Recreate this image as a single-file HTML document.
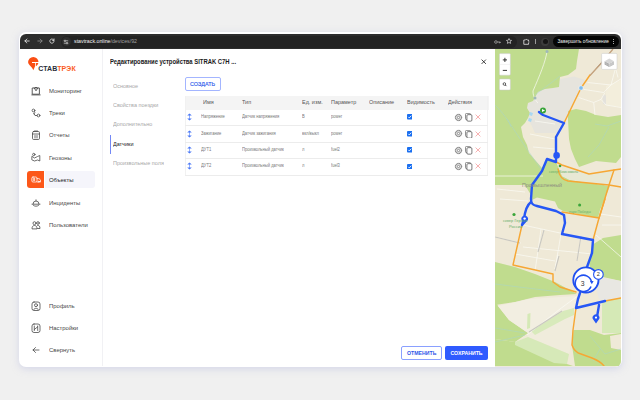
<!DOCTYPE html>
<html><head><meta charset="utf-8">
<style>
*{box-sizing:border-box;margin:0;padding:0}
html,body{width:640px;height:400px;overflow:hidden;background:#f0f0f0;font-family:"Liberation Sans",sans-serif;position:relative}
.a{position:absolute}
.t{position:absolute;white-space:nowrap;line-height:1}
#win{left:18.5px;top:31.8px;width:603.5px;height:335px;border-radius:7px;background:#fff;box-shadow:0 2px 7px rgba(185,190,225,.5)}
#bar{left:19px;top:33px;width:602px;height:16px}
.mi{position:absolute;left:49px;font-size:6.2px;color:#484848;white-space:nowrap;line-height:1;transform:scaleX(0.96);transform-origin:0 50%}
.tab{position:absolute;left:113px;font-size:6px;color:#a8a8a8;white-space:nowrap;line-height:1;transform:scaleX(0.91);transform-origin:0 50%}
#map{left:495px;top:48.8px;width:126px;height:318px;background:#ece9dd;overflow:hidden;border-radius:0 0 6px 0}
.th{position:absolute;top:99.2px;font-size:6px;color:#555;white-space:nowrap;line-height:1;transform:scaleX(0.91);transform-origin:0 50%}
.td{position:absolute;font-size:4.5px;color:#777;white-space:nowrap;line-height:1;transform:scaleX(0.91);transform-origin:0 50%}
</style></head>
<body>
<div id="win" class="a"></div>
<div id="bar" class="a">
  <div class="a" style="left:0.9px;top:0.8px;width:601.1px;height:15px;background:#2d2d2d;border-radius:6px 6px 0 0"></div>
  <svg class="a" style="left:4.9px;top:5.3px" width="6" height="6" viewBox="0 0 6 6" fill="none" stroke="#e6e6e6" stroke-width="0.85" stroke-linecap="round" stroke-linejoin="round"><path d="M5.2,3 H0.9 M2.9,1 L0.9,3 L2.9,5"/></svg>
  <svg class="a" style="left:17.5px;top:5.3px" width="6" height="6" viewBox="0 0 6 6" fill="none" stroke="#8c8c8c" stroke-width="0.85" stroke-linecap="round" stroke-linejoin="round"><path d="M0.8,3 H5.1 M3.1,1 L5.1,3 L3.1,5"/></svg>
  <svg class="a" style="left:29.7px;top:5.3px" width="6" height="6" viewBox="0 0 6 6" fill="none" stroke="#e6e6e6" stroke-width="0.85" stroke-linecap="round"><path d="M4.9,2.3 A2.1,2.1 0 1 0 5,3.6"/><path d="M5,0.9 V2.4 H3.6"/></svg>
  <div class="a" style="left:42px;top:2.5px;width:456px;height:12px;border-radius:6px;background:#232323"></div>
  <div class="a" style="left:42.6px;top:3.7px;width:9.6px;height:9.6px;border-radius:5px;background:#2f2f2f"></div>
  <svg class="a" style="left:44.4px;top:5.5px" width="6" height="6" viewBox="0 0 6 6" fill="none" stroke="#dcdcdc" stroke-width="0.65"><path d="M0.8,1.8 H5.2 M0.8,4.2 H5.2"/><circle cx="2" cy="1.8" r="0.75" fill="#2f2f2f"/><circle cx="4" cy="4.2" r="0.75" fill="#2f2f2f"/></svg>
  <div class="t" style="left:55px;top:6.2px;font-size:5.25px;color:#f2f2f2">stavtrack.online<span style="color:#a0a0a0">/devices/92</span></div>
  <svg class="a" style="left:475px;top:5.5px" width="7" height="6" viewBox="0 0 7 6" fill="none" stroke="#aaa" stroke-width="0.75"><circle cx="1.9" cy="3" r="1.3"/><path d="M3.2,3 H6.3 M5.4,3 V4.3 M6.3,3 V4"/></svg>
  <svg class="a" style="left:486.5px;top:5.3px" width="6" height="6" viewBox="0 0 7 7" fill="none" stroke="#e0e0e0" stroke-width="0.8" stroke-linejoin="round"><path d="M3.5,0.6 L4.4,2.6 L6.5,2.8 L4.9,4.2 L5.4,6.3 L3.5,5.2 L1.6,6.3 L2.1,4.2 L0.5,2.8 L2.6,2.6Z"/></svg>
  <svg class="a" style="left:504px;top:4.8px" width="7" height="7" viewBox="0 0 7 7" fill="none" stroke="#e8e8e8" stroke-width="0.8" stroke-linejoin="round"><path d="M0.8,2 H2.4 A1,1 0 0 1 4.2,2 H5.6 V3.2 A0.9,0.9 0 0 1 5.6,4.8 V6.3 H0.8Z"/></svg>
  <div class="a" style="left:516px;top:5.8px;width:0.8px;height:5px;background:#9a9a9a"></div>
  <div class="a" style="left:522.2px;top:4.6px;width:8px;height:8px;border-radius:4px;background:#3c3c3c"></div><div class="a" style="left:524px;top:6.2px;width:4.6px;height:5px;border-radius:2.5px;background:#151515"></div>
  <div class="a" style="left:534px;top:3px;width:65.5px;height:11px;border-radius:5.5px;background:#050505"></div>
  <div class="t" style="left:538.5px;top:6.9px;font-size:4.7px;color:#f0f0f0">Завершить обновление</div>
  <div class="a" style="left:594.1px;top:6.2px;width:0.9px;height:0.9px;border-radius:1px;background:#ddd;box-shadow:0 2px 0 #ddd,0 4px 0 #ddd"></div>
</div>
<!-- sidebar -->
<div class="a" style="left:102px;top:49px;width:1px;height:317px;background:#f1f1f4"></div>
<svg class="a" style="left:27px;top:56px" width="13" height="15" viewBox="0 0 13 15">
<path d="M1.1,6.1 A5.2,5.2 0 0 1 11.5,6.1 L5,6.1 L5,6.9 L8.1,6.9 L8.1,10 C7.6,11.5 6.9,13 6.3,14.2 C5.5,12 4.1,10.6 2.9,9.4 C1.7,8.3 1.1,7.3 1.1,6.1Z" fill="#fa4e14"/>
<path d="M8.9,6.9 L11.4,6.9 C11.1,8 10.3,9.2 8.9,10.2Z" fill="#fa4e14"/>
</svg>
<div class="t" style="left:38.2px;top:65.1px;font-size:7px;font-weight:700;letter-spacing:0.1px;color:#2b2f3a;transform:scaleX(1.0);transform-origin:0 0">СТАВ<span style="color:#fa5a1e">ТРЭК</span></div>
<div class="a" style="left:27.1px;top:171.3px;width:17.2px;height:17.1px;border-radius:3px 0 0 3px;background:#fc5719"></div>
<div class="a" style="left:45.3px;top:171.3px;width:49.4px;height:17.1px;border-radius:0 3px 3px 0;background:#f5f5fb"></div>
<svg class="a" style="left:31px;top:85.5px" width="10" height="10" viewBox="0 0 10 10" fill="none" stroke="#4a4a4a" stroke-width="0.9" stroke-linecap="round" stroke-linejoin="round"><path d="M1.6,2 H8.4 V8.2 H1.6Z"/><path d="M0.8,8.9 H9.2"/><path d="M3.2,2 L5,4.8 L6.8,2"/><path d="M4.2,1.5 H5.8"/></svg>
<svg class="a" style="left:31px;top:108px" width="10" height="10" viewBox="0 0 10 10" fill="none" stroke="#4a4a4a" stroke-width="0.8" stroke-linecap="round" stroke-linejoin="round"><circle cx="2.5" cy="2.5" r="1.4"/><circle cx="7.5" cy="7.5" r="1.4"/><path d="M3.5,3.6 C5,5 2,6 4,7.5 L6,7.5"/><path d="M2.5,5.5 L3.5,6.5"/></svg>
<svg class="a" style="left:31px;top:130px" width="10" height="10" viewBox="0 0 10 10" fill="none" stroke="#4a4a4a" stroke-width="0.8" stroke-linecap="round" stroke-linejoin="round"><rect x="1.5" y="1.5" width="7" height="8" rx="1.2"/><path d="M3.5,1 H6.5 M1.5,4 H8.5 M4,5.5 V8 M6,5.5 V8"/></svg>
<svg class="a" style="left:31px;top:152px" width="10" height="10" viewBox="0 0 10 10" fill="none" stroke="#4a4a4a" stroke-width="0.8" stroke-linecap="round" stroke-linejoin="round"><path d="M1.2,4.5 L3.5,6 L6.5,4.5 L8.8,3.5 V9 L6.5,8 L3.5,9 L1.2,8Z"/><circle cx="2.8" cy="2.5" r="1.2"/></svg>
<svg class="a" style="left:30.8px;top:175px" width="10" height="10" viewBox="0 0 10 10" fill="none" stroke="#fff" stroke-width="0.75" stroke-linecap="round" stroke-linejoin="round"><rect x="0.8" y="2" width="5.2" height="5" rx="1.2"/><path d="M6,3.6 H7.6 C8.6,3.6 9.6,4.8 9.6,6 V7 H6"/><path d="M2.3,3.2 V5.6 M3.6,3.2 V5.6"/><circle cx="7.8" cy="6.6" r="0.5"/></svg>
<svg class="a" style="left:31px;top:197.5px" width="10" height="10" viewBox="0 0 10 10" fill="none" stroke="#4a4a4a" stroke-width="0.8" stroke-linecap="round" stroke-linejoin="round"><path d="M2,6 A3,3 0 0 1 8,6"/><path d="M1,6.2 H9 M2.5,7.5 C4,8.5 6,8.5 7.5,7.5"/><path d="M5,1.8 V2.8"/></svg>
<svg class="a" style="left:31px;top:219.5px" width="10" height="10" viewBox="0 0 10 10" fill="none" stroke="#4a4a4a" stroke-width="0.8" stroke-linecap="round" stroke-linejoin="round"><circle cx="3.5" cy="3.2" r="1.5"/><path d="M1,8.5 C1,6.5 2,5.5 3.5,5.5 C5,5.5 6,6.5 6,8.5Z"/><circle cx="7" cy="3" r="1.3"/><path d="M6.5,5.3 C8,5.3 9,6 9,8.5 H6.5"/></svg>
<svg class="a" style="left:31px;top:301px" width="10" height="10" viewBox="0 0 10 10" fill="none" stroke="#4a4a4a" stroke-width="0.8" stroke-linecap="round" stroke-linejoin="round"><rect x="1" y="1" width="8" height="8.5" rx="2"/><circle cx="5" cy="4.2" r="1.5"/><path d="M2.8,8.5 C3.2,6.8 6.8,6.8 7.2,8.5"/></svg>
<svg class="a" style="left:31px;top:323px" width="10" height="10" viewBox="0 0 10 10" fill="none" stroke="#4a4a4a" stroke-width="0.8" stroke-linecap="round" stroke-linejoin="round"><rect x="1" y="1" width="8" height="8.5" rx="2"/><path d="M3.3,3 V7.5 M6.7,3 V7.5 M3.3,6.5 L6.7,3.8"/></svg>
<svg class="a" style="left:31px;top:345px" width="10" height="10" viewBox="0 0 10 10" fill="none" stroke="#4a4a4a" stroke-width="0.8" stroke-linecap="round" stroke-linejoin="round"><path d="M8,5 H2 M4.5,2.5 L2,5 L4.5,7.5"/></svg>
<div class="mi" style="top:87.9px">Мониторинг</div>
<div class="mi" style="top:110.2px">Треки</div>
<div class="mi" style="top:132.4px">Отчеты</div>
<div class="mi" style="top:154.7px">Геозоны</div>
<div class="mi" style="top:177.1px;color:#222">Объекты</div>
<div class="mi" style="top:199.8px">Инциденты</div>
<div class="mi" style="top:221.8px">Пользователи</div>
<div class="mi" style="top:302.7px">Профиль</div>
<div class="mi" style="top:325.0px">Настройки</div>
<div class="mi" style="top:347.0px">Свернуть</div>

<!-- modal -->
<div class="t" style="left:110px;top:59.2px;font-size:6.5px;font-weight:700;color:#1a1a1a;transform:scaleX(0.905);transform-origin:0 0">Редактирование устройства SITRAK C7H ...</div>
<svg class="a" style="left:481px;top:58.8px" width="5.5" height="5.5" viewBox="0 0 11 11"><path d="M1.2 1.2L9.8 9.8M9.8 1.2L1.2 9.8" stroke="#222" stroke-width="1.7"/></svg>
<div class="tab" style="top:83.2px">Основное</div>
<div class="tab" style="top:102.2px">Свойства поездки</div>
<div class="tab" style="top:121.2px">Дополнительно</div>
<div class="tab" style="top:140.7px;color:#222">Датчики</div>
<div class="tab" style="top:159.7px">Произвольные поля</div>
<div class="a" style="left:109.5px;top:134.5px;width:1.2px;height:19px;background:#7388f5"></div>

<div class="a" style="left:184.6px;top:76.8px;width:36px;height:13.8px;border:0.8px solid #a3b5ff;border-radius:2px"></div>
<div class="t" style="left:189.9px;top:82.1px;font-size:5.9px;color:#2f5ff0;transform:scaleX(0.92);transform-origin:0 0;-webkit-text-stroke:0.15px #2a50e6">СОЗДАТЬ</div>

<div class="a" style="left:185px;top:95.5px;width:303.5px;height:14px;background:#f4f4f4"></div>
<div class="th" style="left:202.5px">Имя</div>
<div class="th" style="left:242px">Тип</div>
<div class="th" style="left:302px">Ед. изм.</div>
<div class="th" style="left:331px">Параметр</div>
<div class="th" style="left:368.5px">Описание</div>
<div class="th" style="left:407px">Видимость</div>
<div class="th" style="left:448px">Действия</div>
<div class="a" style="left:185px;top:95.5px;width:303px;height:79.5px;border-left:1px solid #f1f1f1;border-right:1px solid #f1f1f1"></div>
<div class="a" style="left:185px;top:125.25px;width:303px;height:0.8px;background:#ececec"></div>
<div class="a" style="left:185px;top:141.75px;width:303px;height:0.8px;background:#ececec"></div>
<div class="a" style="left:185px;top:158px;width:303px;height:0.8px;background:#ececec"></div>
<div class="a" style="left:185px;top:174.5px;width:303px;height:0.8px;background:#ececec"></div>
<div class="td" style="left:200.5px;top:115.0px">Напряжение</div>
<div class="td" style="left:242px;top:115.0px">Датчик напряжения</div>
<div class="td" style="left:302px;top:115.0px">В</div>
<div class="td" style="left:331px;top:115.0px">power</div>
<svg class="a" style="left:186px;top:113px" width="7" height="8" viewBox="0 0 7 8"><path d="M3.5 1.8V6.2" stroke="#4a78f6" stroke-width="0.6"/><path d="M1.2 2.6L3.5 0.6L5.8 2.6Z M1.2 5.4L3.5 7.4L5.8 5.4Z" fill="#4a78f6"/></svg>
<svg class="a" style="left:406.5px;top:114.3px" width="5.5" height="5.5" viewBox="0 0 11 11"><rect x="0" y="0" width="11" height="11" rx="1.8" fill="#1a6ff0"/><path d="M2.5 5.7L4.6 7.8L8.6 3.3" stroke="#fff" stroke-width="1.7" fill="none"/></svg>
<svg class="a" style="left:454px;top:112.6px" width="9" height="9" viewBox="0 0 18 18"><circle cx="9" cy="9" r="6.4" fill="none" stroke="#555" stroke-width="1.5" stroke-dasharray="2.3 1.05"/><circle cx="9" cy="9" r="5.5" fill="none" stroke="#555" stroke-width="1"/><circle cx="9" cy="9" r="2.4" fill="none" stroke="#555" stroke-width="1.3"/></svg>
<svg class="a" style="left:464.5px;top:113px" width="8" height="8.5" viewBox="0 0 16 17"><rect x="1" y="0.8" width="10" height="12.5" rx="2" fill="none" stroke="#555" stroke-width="1.3"/><rect x="3.8" y="3.3" width="10" height="13" rx="2.2" fill="#fff" stroke="#444" stroke-width="1.4"/></svg>
<svg class="a" style="left:474.5px;top:114.2px" width="6" height="6" viewBox="0 0 12 12"><path d="M1.2 1.2L10.8 10.8M10.8 1.2L1.2 10.8" stroke="#f07070" stroke-width="1.1"/></svg>
<div class="td" style="left:200.5px;top:131.75px">Зажигание</div>
<div class="td" style="left:242px;top:131.75px">Датчик зажигания</div>
<div class="td" style="left:302px;top:131.75px">вкл/выкл</div>
<div class="td" style="left:331px;top:131.75px">power</div>
<svg class="a" style="left:186px;top:129.75px" width="7" height="8" viewBox="0 0 7 8"><path d="M3.5 1.8V6.2" stroke="#4a78f6" stroke-width="0.6"/><path d="M1.2 2.6L3.5 0.6L5.8 2.6Z M1.2 5.4L3.5 7.4L5.8 5.4Z" fill="#4a78f6"/></svg>
<svg class="a" style="left:406.5px;top:131.05px" width="5.5" height="5.5" viewBox="0 0 11 11"><rect x="0" y="0" width="11" height="11" rx="1.8" fill="#1a6ff0"/><path d="M2.5 5.7L4.6 7.8L8.6 3.3" stroke="#fff" stroke-width="1.7" fill="none"/></svg>
<svg class="a" style="left:454px;top:129.35px" width="9" height="9" viewBox="0 0 18 18"><circle cx="9" cy="9" r="6.4" fill="none" stroke="#555" stroke-width="1.5" stroke-dasharray="2.3 1.05"/><circle cx="9" cy="9" r="5.5" fill="none" stroke="#555" stroke-width="1"/><circle cx="9" cy="9" r="2.4" fill="none" stroke="#555" stroke-width="1.3"/></svg>
<svg class="a" style="left:464.5px;top:129.75px" width="8" height="8.5" viewBox="0 0 16 17"><rect x="1" y="0.8" width="10" height="12.5" rx="2" fill="none" stroke="#555" stroke-width="1.3"/><rect x="3.8" y="3.3" width="10" height="13" rx="2.2" fill="#fff" stroke="#444" stroke-width="1.4"/></svg>
<svg class="a" style="left:474.5px;top:130.95px" width="6" height="6" viewBox="0 0 12 12"><path d="M1.2 1.2L10.8 10.8M10.8 1.2L1.2 10.8" stroke="#f07070" stroke-width="1.1"/></svg>
<div class="td" style="left:200.5px;top:148.0px">ДУТ1</div>
<div class="td" style="left:242px;top:148.0px">Произвольный датчик</div>
<div class="td" style="left:302px;top:148.0px">л</div>
<div class="td" style="left:331px;top:148.0px">fuel2</div>
<svg class="a" style="left:186px;top:146px" width="7" height="8" viewBox="0 0 7 8"><path d="M3.5 1.8V6.2" stroke="#4a78f6" stroke-width="0.6"/><path d="M1.2 2.6L3.5 0.6L5.8 2.6Z M1.2 5.4L3.5 7.4L5.8 5.4Z" fill="#4a78f6"/></svg>
<svg class="a" style="left:406.5px;top:147.3px" width="5.5" height="5.5" viewBox="0 0 11 11"><rect x="0" y="0" width="11" height="11" rx="1.8" fill="#1a6ff0"/><path d="M2.5 5.7L4.6 7.8L8.6 3.3" stroke="#fff" stroke-width="1.7" fill="none"/></svg>
<svg class="a" style="left:454px;top:145.6px" width="9" height="9" viewBox="0 0 18 18"><circle cx="9" cy="9" r="6.4" fill="none" stroke="#555" stroke-width="1.5" stroke-dasharray="2.3 1.05"/><circle cx="9" cy="9" r="5.5" fill="none" stroke="#555" stroke-width="1"/><circle cx="9" cy="9" r="2.4" fill="none" stroke="#555" stroke-width="1.3"/></svg>
<svg class="a" style="left:464.5px;top:146px" width="8" height="8.5" viewBox="0 0 16 17"><rect x="1" y="0.8" width="10" height="12.5" rx="2" fill="none" stroke="#555" stroke-width="1.3"/><rect x="3.8" y="3.3" width="10" height="13" rx="2.2" fill="#fff" stroke="#444" stroke-width="1.4"/></svg>
<svg class="a" style="left:474.5px;top:147.2px" width="6" height="6" viewBox="0 0 12 12"><path d="M1.2 1.2L10.8 10.8M10.8 1.2L1.2 10.8" stroke="#f07070" stroke-width="1.1"/></svg>
<div class="td" style="left:200.5px;top:164.25px">ДУТ2</div>
<div class="td" style="left:242px;top:164.25px">Произвольный датчик</div>
<div class="td" style="left:302px;top:164.25px">л</div>
<div class="td" style="left:331px;top:164.25px">fuel3</div>
<svg class="a" style="left:186px;top:162.25px" width="7" height="8" viewBox="0 0 7 8"><path d="M3.5 1.8V6.2" stroke="#4a78f6" stroke-width="0.6"/><path d="M1.2 2.6L3.5 0.6L5.8 2.6Z M1.2 5.4L3.5 7.4L5.8 5.4Z" fill="#4a78f6"/></svg>
<svg class="a" style="left:406.5px;top:163.55px" width="5.5" height="5.5" viewBox="0 0 11 11"><rect x="0" y="0" width="11" height="11" rx="1.8" fill="#1a6ff0"/><path d="M2.5 5.7L4.6 7.8L8.6 3.3" stroke="#fff" stroke-width="1.7" fill="none"/></svg>
<svg class="a" style="left:454px;top:161.85px" width="9" height="9" viewBox="0 0 18 18"><circle cx="9" cy="9" r="6.4" fill="none" stroke="#555" stroke-width="1.5" stroke-dasharray="2.3 1.05"/><circle cx="9" cy="9" r="5.5" fill="none" stroke="#555" stroke-width="1"/><circle cx="9" cy="9" r="2.4" fill="none" stroke="#555" stroke-width="1.3"/></svg>
<svg class="a" style="left:464.5px;top:162.25px" width="8" height="8.5" viewBox="0 0 16 17"><rect x="1" y="0.8" width="10" height="12.5" rx="2" fill="none" stroke="#555" stroke-width="1.3"/><rect x="3.8" y="3.3" width="10" height="13" rx="2.2" fill="#fff" stroke="#444" stroke-width="1.4"/></svg>
<svg class="a" style="left:474.5px;top:163.45px" width="6" height="6" viewBox="0 0 12 12"><path d="M1.2 1.2L10.8 10.8M10.8 1.2L1.2 10.8" stroke="#f07070" stroke-width="1.1"/></svg>
<div id="map" class="a"><svg width="126" height="317" viewBox="0 0 126 317" style="position:absolute;left:0;top:0">
<rect width="126" height="317" fill="#efe9d7"/>
<!-- grey industrial -->
<path d="M62,31 L70,29 L79,27.5 L90,31 L86,39 L69,74 L64,84 L40,84 L33,69 L35,64 L32,59 L33,54 L38,52 L43,43 L50,40 L58,39 L64,38Z" fill="#e6e4dd"/>

<!-- greens -->
<path d="M0,0 L84,0 L82,12 L81,20 L73,26 L65,28 L64,38 L58,39 L50,40 L43,43 L38,52 L33,54 L32,59 L35,64 L33,69 L30,74 L26,78 L28,88 L32,96 L34,104 L40,111 L47,119 L52,110 L61,113 L67,127 L75,131 L115,137 L105,161 L103,169 L68,162 L63,159 L60,152.5 L42,148.5 L37,151 L36,146 L30,136 L0,136Z" fill="#c0dc8e"/>
<path d="M73,62 L81,60 L91,62 L101,66 L113,68 L126,66 L126,108 L121,114 L101,112 L84,118 L80,110 L76,100 L74,90 L73,70Z" fill="#c0dc8e"/>
<path d="M67,116 L94,125 L119,121 L115,137 L75,131 L67,127Z" fill="#e8e8d4"/>
<path d="M97,196 L108,189 L126,186 L126,232 L108,228 L96,222 L94,214Z" fill="#c0dc8e"/>
<path d="M0,213 L20,218 L40,225 L60,233 L82,245 L65,246 L40,248 L20,253 L0,256Z" fill="#c0dc8e"/>
<path d="M0,250 L3,257 L14,271 L33,284 L20,293 L0,290Z" fill="#c0dc8e"/>
<path d="M0,290 L20,293 L72,315 L78,317 L0,317Z" fill="#c0dc8e"/>
<path d="M78,281 L95,281 L109,286 L126,284 L126,317 L80,317 L77,296Z" fill="#c0dc8e"/>
<path d="M115,287 L126,285 L126,301 L116,299Z" fill="#efe9d7"/>
<path d="M107,253 L126,249 L126,284 L107,284Z" fill="#d5e9b6"/>
<path d="M61,262 L69,260 L75,270 L61,274Z" fill="#d5e9b6"/>
<path d="M3,257 L34,250 L81,247 L80,258 L33,284 L14,271Z" fill="#f2eee1"/>
<path d="M33,284 L80,258 L78,288 L74,305 L33,288Z" fill="#f0ecdc"/>
<path d="M36,282 L68,262 L79,259 L79,266 L70,270 L40,286Z" fill="#d8eabb"/>
<path d="M20,293 L33,288 L74,305 L72,315 L59,314 L20,296Z" fill="#d6e9b8"/>
<path d="M32.5,265 L35.5,264 L35,279 L32,280Z" fill="#d5e9b6"/>
<path d="M104,228 L126,232 L126,248 L112,252 L104,250 L100,236Z" fill="#e8e7e2"/>
<path d="M107.5,46 L117.5,47 L117.5,56 L108,55Z" fill="#e4e2dc"/>
<path d="M111,37 L126,31 L126,58 L111,56Z" fill="#f3eedc"/>
<!-- white roads -->
<g stroke="#fbfaf5" stroke-width="0.7" fill="none">
<path d="M52,2 C51,12 44,28 38,42 C38,48 41,52 43,54"/>
<path d="M0,127 L48,127"/>
<path d="M28,176 L65,184 L98,191"/>
<path d="M46,180 L43,202 M63,206 L60,220"/>
<path d="M101,186 L126,208"/>
<path d="M32,286 L65,260 L84,246"/>
<path d="M92.5,33.5 L116,36 L126,29.8 M88.7,40.4 L108.7,43.5 L116,36 M83.7,48.5 L98.7,53.5 L106,50.4 L110,43.5 M98.7,53.5 L100,66 M106,50.4 L111,56 L126,58.5 M121,21 L123,28.5 M116,36 L120,21"/>
<path d="M105,165 L126,168 M107,176 L126,176"/>
<path d="M49,180 L43,202 L40,222 M66,185 L60,220 M86,187 L82,212 M0,188 L26,194 M28,198 L98,205 M20,205 L60,212"/>
<path d="M2,140 L30,143 M5,150 L33,152 M40,72 L60,75 M35,85 L60,90 M38,98 L60,100"/>
</g>
<g stroke="#c9c7c0" stroke-width="1.1" fill="none">
<path d="M49,181 L43,203"/><path d="M64,207 L60,222"/><path d="M86,187 L82,212"/><path d="M0,188 L25,194"/><path d="M34,283 L67,262"/>
</g>
<!-- streams -->
<g stroke="#a9d5cc" stroke-width="0.5" fill="none">
<path d="M65,27 C55,35 45,42 40,46"/>
<path d="M0,56 C8,64 14,72 16,78"/>
<path d="M12,70 C25,90 35,105 46,120"/>
<path d="M100,75 L112,77 L126,72 M114,78 L104,96 L93,108"/>
<path d="M0,235 L24,238 L65,243"/>
<path d="M0,279 L30,284"/>
<path d="M0,293 L30,286"/>
<path d="M95,287 L110,305 L126,300 M105,300 L98,312"/>
</g>
<!-- orange roads -->
<g stroke="#f6a734" stroke-width="1.45" fill="none" stroke-linecap="round" stroke-linejoin="round">
<path d="M95,26 L86,39 L69,74"/>
<path d="M61,113 L67,116 L94,125 L119,121 L126,120"/>
<path d="M63,120 C64,126 67,131 73,132 L114,136 L126,138"/>
<path d="M119,121 L114,136 L104,169 L98,191"/>
<path d="M67,163 L104,169"/>
<path d="M110,150 L104,169"/>
<path d="M27,176 L18,216 L58,225 L58,233 L65,238 L81,243"/>
<path d="M81,259 L78,281 L77,296 C79,302 82,304 86,305 L97,309 C102,311 106,313 109,317"/>
<path d="M110,252 L126,249"/>
</g>
<path d="M118,0 L106,14.5 L95,26.5" stroke="#c4a27e" stroke-width="1.3"/>
<!-- blue route -->
<g stroke="#2657f5" stroke-width="2.4" fill="none" stroke-linecap="round" stroke-linejoin="round">
<path d="M44,63 L48,66 L69,74 L61,88 L61,108 L61,113 L52,110 L47,122 L37,136 L36,150 C36,155 38,156 42,157 L61,162 L69,166 L70,174 L67,185 L98,191 L97,204 L92,218"/>
<path d="M36,153 C32,156 30,162 29,170 L27,176"/>
<path d="M85,244 L83,250 L81,259 L110,252"/>
<path d="M104,256 L102,268"/>
</g>
<!-- markers -->
<circle cx="61.6" cy="106.4" r="3.3" fill="#2657f5"/>
<circle cx="48" cy="61.5" r="3" fill="#3aa53a"/>
<path d="M47,60 L50,61.5 L47,63Z" fill="#fff"/>
<path d="M28,176.5 L26.8,171.5 A3.3,3.3 0 1 1 32.4,171.8Z" fill="#2657f5"/><circle cx="29.6" cy="169.6" r="1.2" fill="#fff"/>
<path d="M101,274.5 L98.2,270.6 A3.4,3.4 0 1 1 103.8,270.6Z" fill="#2657f5"/><circle cx="101" cy="268.6" r="1.1" fill="#fff"/>
<circle cx="86" cy="39" r="2.2" fill="#7fbdf0" stroke="#fff" stroke-width="0.5"/>
<circle cx="52" cy="2.4" r="1.5" fill="#9fb8b8"/>
<circle cx="40" cy="49" r="1.5" fill="#9fb8b8"/>
<path d="M35,63 L38,64 L37,67 L34,66Z M34,69 L37,70 L36,73 L33,72Z" fill="#a9d8f2"/>
<!-- tree icons -->
<g fill="#3aa53a"><circle cx="65" cy="117" r="1.3"/><circle cx="84.6" cy="156" r="1.5"/><circle cx="19" cy="165.5" r="1.6"/></g>
<!-- clusters -->
<circle cx="90.9" cy="231" r="12.6" fill="#fff" stroke="#2050f0" stroke-width="1.9"/>
<path d="M96.00,237.47 A8.2,8.2 0 1 1 96.52,233.26" fill="none" stroke="#2050f0" stroke-width="1.6"/>
<path d="M95,232 L98.6,232 L96.8,235.2Z" fill="#2050f0"/>
<text x="87.6" y="237.2" font-family="Liberation Sans" font-size="6.8" text-anchor="middle" fill="#333">3</text>
<circle cx="103.4" cy="225.4" r="4.8" fill="#fff" stroke="#2050f0" stroke-width="1.1"/>
<text x="103.4" y="227.4" font-family="Liberation Sans" font-size="5.6" text-anchor="middle" fill="#333">2</text>
<!-- text labels -->
<text x="27" y="138.4" font-family="Liberation Sans" font-size="5.3" fill="#8e8e80">Промышленный</text>
<text x="54" y="124.4" font-family="Liberation Sans" font-size="3.6" fill="#6ab06a">сквер Комсомола</text>
<text x="74" y="163.6" font-family="Liberation Sans" font-size="3.6" fill="#6ab06a">парк Победы</text>
<text x="8" y="173" font-family="Liberation Sans" font-size="4" fill="#6ab06a">сквер Героев</text>
<text x="14" y="178.5" font-family="Liberation Sans" font-size="4" fill="#6ab06a">России</text>
<!-- controls -->
<rect x="4.4" y="4.6" width="11" height="21.6" rx="1" fill="#fff" stroke="#c8c8c8" stroke-width="0.5"/>
<rect x="4.4" y="30" width="11" height="11" rx="1" fill="#fff" stroke="#c8c8c8" stroke-width="0.5"/>
<rect x="106.6" y="4.4" width="15.4" height="16" rx="1" fill="#fff" stroke="#c8c8c8" stroke-width="0.5"/>
<path d="M9.9,8.8 V13 M7.8,10.9 H12" stroke="#222" stroke-width="0.9"/>
<path d="M7.8,21.4 H12" stroke="#222" stroke-width="0.9"/>
<path d="M4.5,15.4 H15.3" stroke="#e6e6e6" stroke-width="0.5"/>
<circle cx="9.4" cy="35" r="1.3" fill="none" stroke="#222" stroke-width="0.7"/>
<path d="M10.3,36 L11.4,37.1" stroke="#222" stroke-width="0.8"/>
<path d="M109.6,12.2 L114.3,14.8 L114.3,18 L109.6,15.4Z" fill="#9e9e9e"/><path d="M119,12.2 L114.3,14.8 L114.3,18 L119,15.4Z" fill="#b8b8b8"/><path d="M109.6,12.2 L114.3,9.6 L119,12.2 L114.3,14.8Z" fill="#d6d6d6"/><path d="M109.6,13.3 L114.3,15.9 L119,13.3 M109.6,14.4 L114.3,17 L119,14.4" stroke="#eee" stroke-width="0.35" fill="none"/>

</svg></div>

<div class="a" style="left:401px;top:346px;width:41px;height:14px;border:1px solid #8aa0ff;border-radius:2px"></div>
<div class="t" style="left:407px;top:350.8px;font-size:5.2px;color:#2f55e8;font-weight:700">ОТМЕНИТЬ</div>
<div class="a" style="left:445.1px;top:346px;width:43px;height:13.8px;background:#2f5bff;border-radius:2px"></div>
<div class="t" style="left:450.5px;top:350.8px;font-size:5.2px;color:#fff;font-weight:700">СОХРАНИТЬ</div>
</body></html>
